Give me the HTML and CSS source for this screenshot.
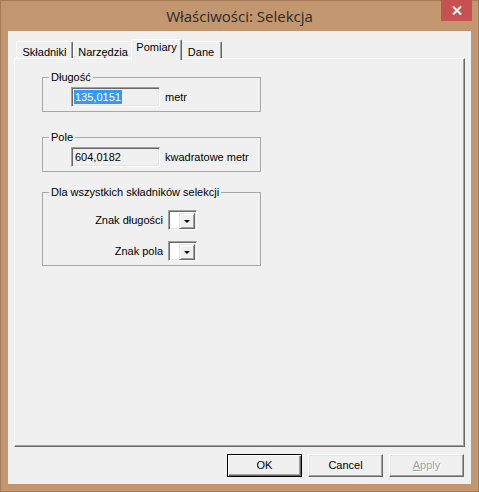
FILE: index.html
```html
<!DOCTYPE html>
<html lang="pl">
<head>
<meta charset="utf-8">
<title>Właściwości: Selekcja</title>
<link rel="stylesheet" href="styles.css">
</head>
<body>
<div class="window">
  <div class="titlebar">
    <div class="title">Właściwości: Selekcja</div>
    <div class="close">
      <svg width="10" height="9" viewBox="0 0 10 9"><path d="M1 0.5 L9 8.5 M9 0.5 L1 8.5" stroke="#fff" stroke-width="2"/></svg>
    </div>
  </div>
  <div class="client">
    <div class="tabs">
      <div class="tab tab-skladniki">Składniki</div>
      <div class="tab tab-narzedzia">Narzędzia</div>
      <div class="tab tab-pomiary selected">Pomiary</div>
      <div class="tab tab-dane">Dane</div>
    </div>
    <div class="panel">
      <fieldset class="group group-dlugosc">
        <legend>Długość</legend>
        <div class="row">
          <div class="textbox"><span class="sel">135,0151</span></div>
          <span class="unit">metr</span>
        </div>
      </fieldset>
      <fieldset class="group group-pole">
        <legend>Pole</legend>
        <div class="row">
          <div class="textbox"><span class="val">604,0182</span></div>
          <span class="unit">kwadratowe metr</span>
        </div>
      </fieldset>
      <fieldset class="group group-all">
        <legend>Dla wszystkich składników selekcji</legend>
        <div class="grid">
          <span class="lbl">Znak długości</span>
          <div class="combo"><div class="field"></div><div class="drop"><span class="arrow"></span></div></div>
          <span class="lbl">Znak pola</span>
          <div class="combo"><div class="field"></div><div class="drop"><span class="arrow"></span></div></div>
        </div>
      </fieldset>
    </div>
    <div class="buttons">
      <div class="btn default">OK</div>
      <div class="btn">Cancel</div>
      <div class="btn disabled"><u>A</u>pply</div>
    </div>
  </div>
</div>
</body>
</html>
```

FILE: styles.css
```css
* { box-sizing: border-box; }
html, body { margin: 0; padding: 0; }
body {
  width: 479px;
  height: 492px;
  overflow: hidden;
  background: #c2966e;
  font-family: "Liberation Sans", Arial, sans-serif;
  font-size: 11px;
  color: #000;
}
.window {
  width: 479px;
  height: 492px;
  border: 1px solid #a57c57;
  display: flex;
  flex-direction: column;
}
.titlebar {
  height: 30px;
  flex: none;
  display: grid;
  grid-template-columns: 1fr auto 1fr;
  align-items: start;
}
.title {
  grid-column: 2;
  font-family: "Open Sans", "Noto Sans", sans-serif;
  font-size: 15px;
  color: #2b2b2b;
  line-height: 30px;
  white-space: nowrap;
}
.close {
  grid-column: 3;
  justify-self: end;
  width: 31px;
  height: 21px;
  margin-top: -1px;
  margin-right: 6px;
  background: #c75050;
  display: flex;
  align-items: center;
  justify-content: center;
}
.client {
  flex: 1;
  margin: 0 7px 7px 7px;
  background: #f0f0f0;
  padding: 8px 6px 0 6px;
  display: flex;
  flex-direction: column;
}
.tabs {
  height: 19px;
  display: flex;
  align-items: flex-end;
  padding-left: 2px;
  position: relative;
  z-index: 1;
}
.tab {
  height: 17px;
  border: 1px solid;
  border-bottom: none;
  border-color: #fff #696969 #fff #fff;
  box-shadow: inset -1px 0 #a0a0a0;
  border-radius: 2px 2px 0 0;
  text-align: center;
  line-height: 13px;
  padding-top: 4px;
  white-space: nowrap;
  background: #f0f0f0;
}
.tab-skladniki { width: 57px; }
.tab-narzedzia { width: 60px; }
.tab-pomiary { width: 51px; }
.tab-dane { width: 42px; }
.tab.selected {
  height: 21px;
  margin: 0 -2px -2px -2px;
  padding-top: 1px;
  position: relative;
  z-index: 2;
}
.panel {
  height: 389px;
  flex: none;
  border: 1px solid;
  border-color: #fff #696969 #696969 #fff;
  box-shadow: inset -1px -1px #a0a0a0;
  padding: 12px 0 0 27px;
}
.group {
  width: 219px;
  margin: 0;
  padding: 0 0 4px 28px;
  border: 1px solid #a8a8a8;
  min-width: 0;
}
.group legend {
  padding: 0 2px;
  line-height: 13px;
  margin-left: -22px;
}
.group-pole { margin-top: 19px; }
.group-all { margin-top: 14px; padding: 0 0 4px 0; }
.group-all legend { margin-left: 6px; }
.row {
  display: flex;
  align-items: center;
  margin-top: 3px;
}
.textbox {
  width: 89px;
  height: 20px;
  border: 1px solid;
  border-color: #a0a0a0 #fff #fff #a0a0a0;
  box-shadow: inset 1px 1px #696969, inset -1px -1px #e3e3e3;
  background: #f0f0f0;
  padding: 2px 0 0 2px;
  line-height: 14px;
}
.sel {
  display: inline-block;
  background: #3399ff;
  color: #fff;
  padding: 0 1px;
}
.val { padding-left: 1px; }
.unit { margin-left: 5px; }
.grid {
  display: grid;
  grid-template-columns: 120px 29px;
  column-gap: 5px;
  row-gap: 11px;
  align-items: center;
  margin-top: 11px;
}
.lbl { text-align: right; white-space: nowrap; }
.combo {
  width: 29px;
  height: 20px;
  border: 1px solid;
  border-color: #a0a0a0 #fff #fff #a0a0a0;
  box-shadow: inset 1px 1px #696969, inset -1px -1px #e3e3e3;
  background: #fff;
  display: flex;
  padding: 2px 1px 2px 2px;
}
.combo .field { flex: 1; }
.drop {
  width: 16px;
  height: 16px;
  background: #f0f0f0;
  border: 1px solid;
  border-color: #e3e3e3 #696969 #696969 #e3e3e3;
  box-shadow: inset 1px 1px #fff, inset -1px -1px #a0a0a0;
  display: flex;
  align-items: center;
  justify-content: center;
}
.arrow {
  width: 0;
  height: 0;
  border-left: 3px solid transparent;
  border-right: 3px solid transparent;
  border-top: 3px solid #000;
  margin-top: 1px;
}
.buttons {
  display: flex;
  justify-content: flex-end;
  gap: 6px;
  margin-top: 7px;
  padding-right: 1px;
}
.btn {
  width: 75px;
  height: 23px;
  border: 1px solid;
  border-color: #fff #696969 #696969 #fff;
  box-shadow: inset -1px -1px #a0a0a0, inset 1px 1px #e3e3e3;
  background: #f0f0f0;
  text-align: center;
  line-height: 20px;
}
.btn.default {
  border: 1px solid #000;
  box-shadow: inset 1px 1px #fff, inset -1px -1px #696969, inset -2px -2px #a0a0a0;
}
.btn.disabled {
  color: #a0a0a0;
  text-shadow: 1px 1px #fff;
}
```
